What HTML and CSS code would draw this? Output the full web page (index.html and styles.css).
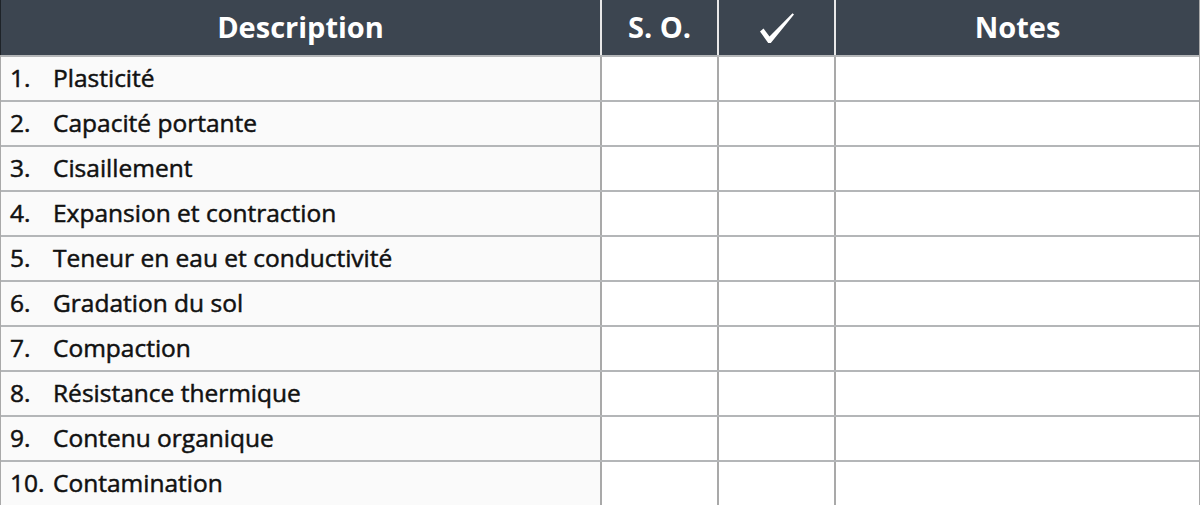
FILE: index.html
```html
<!DOCTYPE html>
<html lang="fr">
<head>
<meta charset="utf-8">
<title>Tableau</title>
<link rel="stylesheet" href="styles.css">
</head>
<body>
<div class="sheet">
  <div class="head">
    <div class="hcell">Description</div>
    <div class="hcell">S. O.</div>
    <div class="hcell"><svg class="check" width="36" height="32" viewBox="0 0 36 32"><path d="M1 19.5 L4.5 16.5 L10.5 24.5 L33.5 1.2 L35 2.5 L11.8 31 L9.2 31 Z" fill="#fff"/></svg></div>
    <div class="hcell">Notes</div>
  </div>
  <div class="row"><div class="desc"><span class="num">1.</span>Plasticité</div><div class="cell"></div><div class="cell"></div><div class="cell"></div></div>
  <div class="row"><div class="desc"><span class="num">2.</span>Capacité portante</div><div class="cell"></div><div class="cell"></div><div class="cell"></div></div>
  <div class="row"><div class="desc"><span class="num">3.</span>Cisaillement</div><div class="cell"></div><div class="cell"></div><div class="cell"></div></div>
  <div class="row"><div class="desc"><span class="num">4.</span>Expansion et contraction</div><div class="cell"></div><div class="cell"></div><div class="cell"></div></div>
  <div class="row"><div class="desc"><span class="num">5.</span>Teneur en eau et conductivité</div><div class="cell"></div><div class="cell"></div><div class="cell"></div></div>
  <div class="row"><div class="desc"><span class="num">6.</span>Gradation du sol</div><div class="cell"></div><div class="cell"></div><div class="cell"></div></div>
  <div class="row"><div class="desc"><span class="num">7.</span>Compaction</div><div class="cell"></div><div class="cell"></div><div class="cell"></div></div>
  <div class="row"><div class="desc"><span class="num">8.</span>Résistance thermique</div><div class="cell"></div><div class="cell"></div><div class="cell"></div></div>
  <div class="row"><div class="desc"><span class="num">9.</span>Contenu organique</div><div class="cell"></div><div class="cell"></div><div class="cell"></div></div>
  <div class="row"><div class="desc"><span class="num">10.</span>Contamination</div><div class="cell"></div><div class="cell"></div><div class="cell"></div></div>
</div>
</body>
</html>
```
FILE: styles.css
```css
html, body {
  margin: 0;
  padding: 0;
  background: #ffffff;
}
.sheet {
  width: 1200px;
  font-family: "Open Sans", "Noto Sans", sans-serif;
  box-sizing: border-box;
  border-left: 1px solid #a9a9a9;
  border-right: 1px solid #a9a9a9;
}
.head, .row {
  display: grid;
  grid-template-columns: 599px 117px 117px 1fr;
}
.head {
  height: 55px;
  background: #3c4550;
  border-left: 1px solid #1e2328;
  margin-left: -1px;
}
.hcell {
  display: flex;
  align-items: center;
  justify-content: center;
  color: #ffffff;
  font-weight: 700;
  font-size: 29px;
  padding-bottom: 2px;
}
.hcell + .hcell {
  border-left: 2px solid #e8e8e8;
}
.check {
  display: block;
  margin-top: 2px;
}
.row {
  height: 45px;
  box-sizing: border-box;
  border-top: 2px solid #b4b6b8;
}
.desc {
  background: #fafafa;
  display: flex;
  align-items: center;
  padding-left: 9px;
  padding-bottom: 2px;
  font-size: 24.5px;
  font-weight: 400;
  color: #111111;
  -webkit-text-stroke: 0.5px #111111;
}
.num {
  display: inline-block;
  width: 43px;
}
.cell {
  border-left: 2px solid #a9a9a9;
  background: #ffffff;
}
```
